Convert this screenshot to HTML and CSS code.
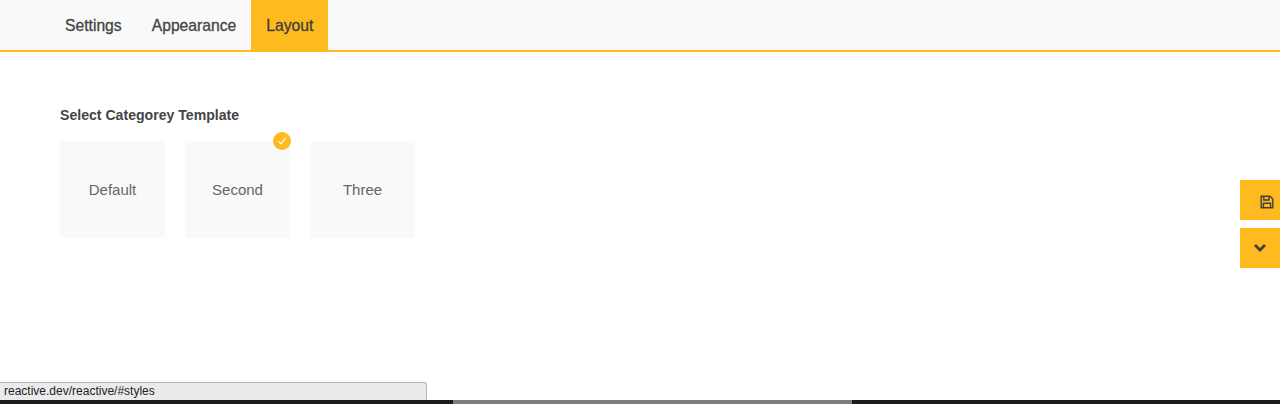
FILE: index.html
```html
<!DOCTYPE html>
<html lang="en">
<head>
  <meta charset="UTF-8" />
  <title>Layout</title>
  <link rel="stylesheet" href="styles.css">
</head>
<body>

  <div class="panel">
    <div class="tabs">
      <a class="tab">Settings</a>
      <a class="tab">Appearance</a>
      <a class="tab active">Layout</a>
    </div>

    <div class="content">
      <h4 class="section-title">Select Categorey Template</h4>
      <div class="templates">
        <div class="template">Default</div>
        <div class="template selected">
          Second
          <span class="check">
            <svg width="10" height="10" viewBox="0 0 10 10"><path d="M1.5 5.4 L4 7.9 L8.6 1.9" fill="none" stroke="#fff" stroke-width="1.2"/></svg>
          </span>
        </div>
        <div class="template">Three</div>
      </div>
    </div>
  </div>

  <div class="side-buttons">
    <div class="side-btn save">
      <svg width="14" height="14" viewBox="0 0 14 14" fill="none" stroke="#3f3f44" stroke-width="1.4">
        <path d="M1.2 1.2 H10 L12.8 4 V12.8 H1.2 Z"/>
        <path d="M3.8 1.2 V5 H9 V1.2"/>
        <path d="M3.4 12.8 V8.2 H10.6 V12.8"/>
      </svg>
    </div>
    <div class="side-btn">
      <svg width="14" height="10" viewBox="0 0 14 10" fill="none" stroke="#3f3f44" stroke-width="2.8">
        <path d="M2 2 L7 7 L12 2"/>
      </svg>
    </div>
  </div>

  <div class="status-url">reactive.dev/reactive/#styles</div>

  <div class="backdrop">
    <div class="backdrop-light"></div>
  </div>

</body>
</html>
```

FILE: styles.css
```css
html, body {
  height: 100%;
}

body {
  margin: 0;
  display: flex;
  flex-direction: column;
  font-family: "Liberation Sans", Arial, sans-serif;
  color: #444;
  background: #fff;
  overflow: hidden;
}

.panel {
  flex: 1;
}

.tabs {
  display: flex;
  height: 50px;
  padding-left: 50px;
  background: #f9f9f9;
  border-bottom: 2px solid #ffba20;
}

.tab {
  padding: 0 15px;
  line-height: 52px;
  font-size: 15.7px;
  font-weight: 500;
  color: #444;
  -webkit-text-stroke: 0.3px #444;
}

.tab.active {
  background: #ffba20;
  color: #3a3a3a;
}

.content {
  padding: 55px 60px 0;
}

.section-title {
  margin: 0 0 18px;
  font-size: 14.1px;
  line-height: 16px;
  font-weight: bold;
}

.templates {
  display: flex;
  gap: 20px;
}

.template {
  position: relative;
  display: flex;
  align-items: center;
  justify-content: center;
  width: 105px;
  height: 97px;
  background: #f9f9f9;
  border-radius: 2px;
  font-size: 15px;
  color: #666;
}

.check {
  position: absolute;
  top: -9px;
  right: -1px;
  display: flex;
  align-items: center;
  justify-content: center;
  width: 18px;
  height: 18px;
  border-radius: 50%;
  background: #ffba20;
}

.side-buttons {
  position: absolute;
  top: 180px;
  right: 0;
  display: flex;
  flex-direction: column;
  gap: 8px;
}

.side-btn {
  display: flex;
  align-items: center;
  justify-content: center;
  width: 40px;
  height: 40px;
  background: #ffba20;
}

.side-btn.save {
  padding: 4px 0 0 14px;
  box-sizing: border-box;
}

.status-url {
  position: absolute;
  left: 0;
  bottom: 4px;
  box-sizing: border-box;
  width: 427px;
  height: 18px;
  padding-left: 4px;
  background: #ebebeb;
  border: 1px solid #b5b5b5;
  border-left: 0;
  border-bottom: 0;
  border-radius: 0 3px 0 0;
  font-size: 12px;
  line-height: 17px;
  color: #222;
}

.backdrop {
  display: flex;
  height: 4px;
  padding-left: 453px;
  background: #1c1c1c;
}

.backdrop-light {
  width: 399px;
  background: #7d7d7d;
}
```
